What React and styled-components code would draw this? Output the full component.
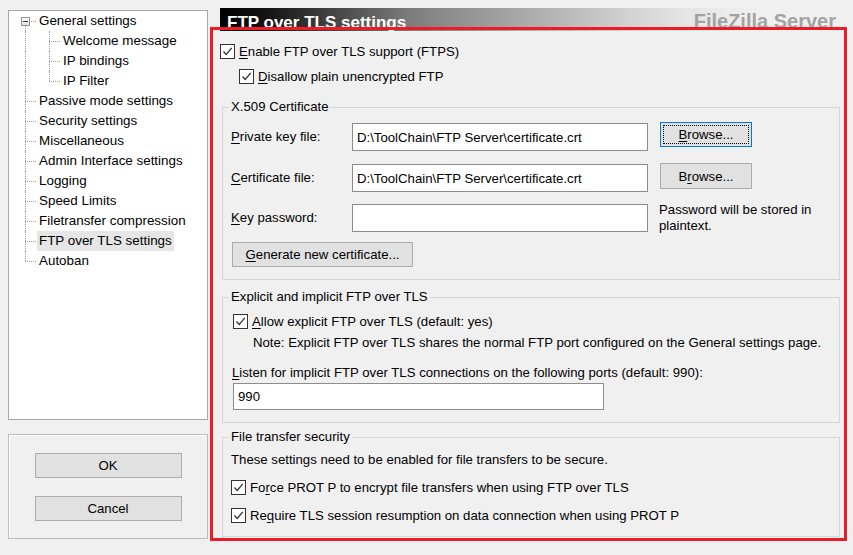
import React from 'react';
import styled, { createGlobalStyle } from 'styled-components';

const GlobalStyle = createGlobalStyle`
  html, body {
    margin: 0;
    padding: 0;
    background: #f0f0f0;
    overflow: hidden;
  }
  body {
    font-family: "Liberation Sans", Arial, sans-serif;
    font-size: 13.2px;
    color: #000;
  }
`;

const tree = [
  { label: 'General settings', children: ['Welcome message', 'IP bindings', 'IP Filter'] },
  { label: 'Passive mode settings' },
  { label: 'Security settings' },
  { label: 'Miscellaneous' },
  { label: 'Admin Interface settings' },
  { label: 'Logging' },
  { label: 'Speed Limits' },
  { label: 'Filetransfer compression' },
  { label: 'FTP over TLS settings', selected: true },
  { label: 'Autoban' },
];

const Window = styled.div`
  display: flex;
  align-items: flex-start;
  width: 853px;
  height: 555px;
  padding: 8px 0 0 8px;
  box-sizing: border-box;
`;

const Sidebar = styled.div`
  width: 200px;
  margin-top: 2px;
  display: flex;
  flex-direction: column;
  gap: 14px;
  flex: none;
`;

const TreePanel = styled.div`
  height: 410px;
  box-sizing: border-box;
  background: #fff;
  border: 1px solid #a8a8a8;
  padding-left: 8px;
  font-size: 13.4px;
`;

const TreeRow = styled.div`
  display: flex;
  height: 20px;
`;

const Rail = styled.span`
  position: relative;
  flex: none;
  width: ${p => p.$w}px;

  &::before {
    content: ${p => (p.$v ? "''" : 'none')};
    position: absolute;
    left: ${p => p.$x}px;
    top: ${p => (p.$first ? '50%' : '0')};
    bottom: ${p => (p.$last ? '50%' : '0')};
    border-left: 1px dotted #a0a0a0;
  }
  &::after {
    content: ${p => (p.$h ? "''" : 'none')};
    position: absolute;
    left: ${p => p.$x}px;
    right: 1px;
    top: 50%;
    border-top: 1px dotted #a0a0a0;
  }
`;

const Expander = styled.span`
  position: absolute;
  z-index: 1;
  left: 4px;
  top: 6px;
  width: 9px;
  height: 9px;
  box-sizing: border-box;
  border: 1px solid #919191;
  background: linear-gradient(#fff, #e2e2e2);
  display: flex;
  align-items: center;
  justify-content: center;

  &::after {
    content: '';
    width: 5px;
    border-top: 1px solid #333;
  }
`;

const NodeLabel = styled.span`
  padding: 0 2px;
  line-height: 20px;
  white-space: nowrap;
  background: ${p => (p.$selected ? '#e6e6e6' : 'transparent')};
`;

const ActionPanel = styled.div`
  height: 105px;
  box-sizing: border-box;
  border: 1px solid #bcbcbc;
  box-shadow: inset 1px 1px 0 #fff;
  display: flex;
  flex-direction: column;
  align-items: center;
  padding-top: 18px;
  gap: 18px;
`;

const Button = styled.button`
  font: inherit;
  font-size: 13.2px;
  color: #000;
  width: ${p => p.$w}px;
  height: ${p => p.$h || 25}px;
  margin: ${p => p.$m || '0'};
  padding: 0;
  flex: none;
  background: #e1e1e1;
  border: 1px solid ${p => (p.$focused ? '#0078d7' : '#adadad')};
  outline: ${p => (p.$focused ? '1px dotted #000' : 'none')};
  outline-offset: -4px;
  box-sizing: border-box;
`;

const Main = styled.div`
  position: relative;
  margin-left: 12px;
  width: 633px;
  flex: none;
  display: flex;
  flex-direction: column;
`;

const TitleBar = styled.div`
  height: 23px;
  overflow: hidden;
  display: flex;
  justify-content: space-between;
  align-items: flex-start;
  background: linear-gradient(
    to right,
    #000 0px,
    #161616 50px,
    #7d7d7d 190px,
    #cfcfcf 400px,
    #e6e6e6 470px,
    #f0f0f0 540px
  );
`;

const PageTitle = styled.span`
  padding: 5px 0 0 7px;
  font-size: 17px;
  font-weight: bold;
  line-height: 20px;
  color: #fff;
`;

const Brand = styled.span`
  padding: 3px 17px 0 0;
  font-size: 20px;
  font-weight: bold;
  line-height: 20px;
  color: #a3a3a3;
`;

const CheckRow = styled.label`
  display: flex;
  align-items: center;
  gap: 4px;
  height: 18px;
  margin-top: ${p => p.$mt || 0}px;
  padding-left: ${p => p.$indent || 0}px;
  white-space: nowrap;
`;

const Box = styled.span`
  width: 15px;
  height: 15px;
  box-sizing: border-box;
  border: 1px solid #333;
  background: #fff;
  display: flex;
  flex: none;

  svg {
    width: 13px;
    height: 13px;
  }
`;

const Group = styled.fieldset`
  margin: ${p => p.$mt}px 13px 0 2px;
  padding: 0 0 ${p => p.$pb}px 8px;
  border: 1px solid #d6d6d6;
  min-width: 0;
`;

const Legend = styled.legend`
  padding: 0 2px;
  margin-left: -2px;
  line-height: 16px;
`;

const FieldRow = styled.div`
  display: flex;
  align-items: flex-start;
  margin-top: ${p => p.$mt}px;
`;

const FieldLabel = styled.span`
  width: 121px;
  flex: none;
  margin-top: 1px;
  line-height: 28px;
`;

const TextBox = styled.input`
  font: inherit;
  color: #000;
  width: ${p => p.$w}px;
  height: ${p => p.$h || 28}px;
  margin: ${p => p.$m || '1px 0 0 0'};
  padding: 0 4px;
  flex: none;
  box-sizing: border-box;
  border: 1px solid #8c8c8c;
  background: #fff;
  outline: none;
`;

const Hint = styled.span`
  flex: 1;
  margin: -1px 0 -3px 11px;
  line-height: 16px;
`;

const Text = styled.div`
  line-height: 16px;
  margin-top: ${p => p.$mt}px;
  padding-left: ${p => p.$indent || 0}px;
  white-space: nowrap;
`;

const Annotation = styled.div`
  position: absolute;
  left: -10px;
  top: 19px;
  width: 637px;
  height: 514px;
  box-sizing: border-box;
  border: 3px solid #ec1c24;
  pointer-events: none;
`;

const Acc = styled.u`
  text-decoration-thickness: 1px;
  text-underline-offset: 2px;
`;

function Check({ children, mt, indent }) {
  return (
    <CheckRow $mt={mt} $indent={indent}>
      <Box>
        <svg viewBox="0 0 13 13">
          <polyline points="2.5,6.5 5.2,9.5 10.8,2.8" fill="none" stroke="#333" strokeWidth="1.3" />
        </svg>
      </Box>
      <span>{children}</span>
    </CheckRow>
  );
}

function Tree() {
  const rows = [];
  tree.forEach((node, i) => {
    const first = i === 0;
    const last = i === tree.length - 1;
    rows.push(
      <TreeRow key={node.label}>
        <Rail $w={20} $x={8} $v $h $first={first} $last={last}>
          {node.children && <Expander />}
        </Rail>
        <NodeLabel $selected={node.selected}>{node.label}</NodeLabel>
      </TreeRow>
    );
    (node.children || []).forEach((child, j) => {
      rows.push(
        <TreeRow key={child}>
          <Rail $w={20} $x={8} $v={!last} />
          <Rail $w={24} $x={12} $v $h $last={j === node.children.length - 1} />
          <NodeLabel>{child}</NodeLabel>
        </TreeRow>
      );
    });
  });
  return <TreePanel>{rows}</TreePanel>;
}

export default function App() {
  return (
    <Window>
      <GlobalStyle />
      <Sidebar>
        <Tree />
        <ActionPanel>
          <Button $w={147}>OK</Button>
          <Button $w={147}>Cancel</Button>
        </ActionPanel>
      </Sidebar>

      <Main>
        <TitleBar>
          <PageTitle>FTP over TLS settings</PageTitle>
          <Brand>FileZilla Server</Brand>
        </TitleBar>

        <Check mt={11}><Acc>E</Acc>nable FTP over TLS support (FTPS)</Check>
        <Check mt={7} indent={19}><Acc>D</Acc>isallow plain unencrypted FTP</Check>

        <Group $mt={14} $pb={12}>
          <Legend>X.509 Certificate</Legend>
          <FieldRow $mt={7}>
            <FieldLabel><Acc>P</Acc>rivate key file:</FieldLabel>
            <TextBox $w={296} readOnly value="D:\ToolChain\FTP Server\certificate.crt" />
            <Button $w={92} $m="0 0 0 12px" $focused><Acc>B</Acc>rowse...</Button>
          </FieldRow>
          <FieldRow $mt={12}>
            <FieldLabel><Acc>C</Acc>ertificate file:</FieldLabel>
            <TextBox $w={296} readOnly value="D:\ToolChain\FTP Server\certificate.crt" />
            <Button $w={92} $h={26} $m="0 0 0 12px">B<Acc>r</Acc>owse...</Button>
          </FieldRow>
          <FieldRow $mt={11}>
            <FieldLabel><Acc>K</Acc>ey password:</FieldLabel>
            <TextBox $w={296} readOnly value="" />
            <Hint>Password will be stored in plaintext.</Hint>
          </FieldRow>
          <FieldRow $mt={10}>
            <Button $w={181} $m="0 0 0 1px"><Acc>G</Acc>enerate new certificate...</Button>
          </FieldRow>
        </Group>

        <Group $mt={9} $pb={12}>
          <Legend>Explicit and implicit FTP over TLS</Legend>
          <Check mt={7} indent={2}><Acc>A</Acc>llow explicit FTP over TLS (default: yes)</Check>
          <Text $mt={5} $indent={22}>
            Note: Explicit FTP over TLS shares the normal FTP port configured on the General settings page.
          </Text>
          <Text $mt={14} $indent={1}>
            <Acc>L</Acc>isten for implicit FTP over TLS connections on the following ports (default: 990):
          </Text>
          <FieldRow $mt={2}>
            <TextBox $w={371} $h={27} $m="0 0 0 2px" readOnly value="990" />
          </FieldRow>
        </Group>

        <Group $mt={6} $pb={12}>
          <Legend>File transfer security</Legend>
          <Text $mt={7}>These settings need to be enabled for file transfers to be secure.</Text>
          <Check mt={10}>Fo<Acc>r</Acc>ce PROT P to encrypt file transfers when using FTP over TLS</Check>
          <Check mt={10}>Re<Acc>q</Acc>uire TLS session resumption on data connection when using PROT P</Check>
        </Group>

        <Annotation />
      </Main>
    </Window>
  );
}
